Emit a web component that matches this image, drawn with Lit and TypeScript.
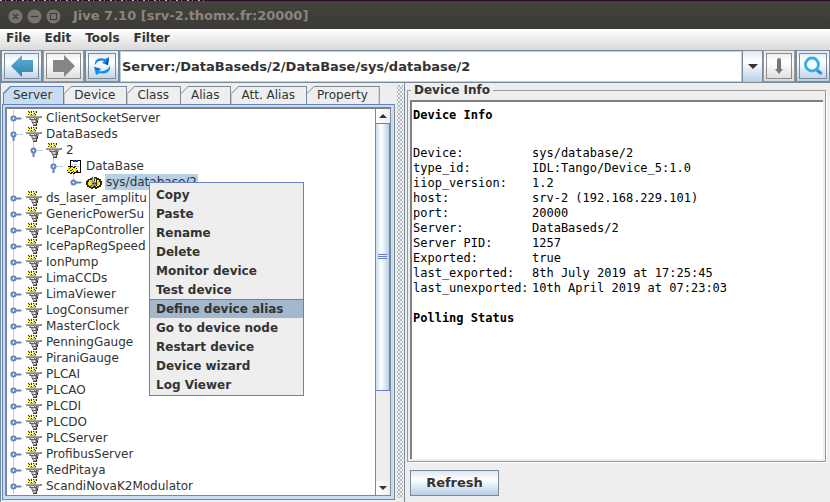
import { LitElement, html, css, svg, nothing } from "lit";
import { customElement, property, state } from "lit/decorators.js";
import { classMap } from "lit/directives/class-map.js";

interface TreeItem {
  label: string;
  icon: "server" | "class" | "device";
  children?: TreeItem[];
  selected?: boolean;
}

const server = (label: string, children?: TreeItem[]): TreeItem => ({ label, icon: "server", children });

const TREE: TreeItem[] = [
  server("ClientSocketServer"),
  server("DataBaseds", [
    server("2", [
      { label: "DataBase", icon: "class", children: [{ label: "sys/database/2", icon: "device", selected: true }] },
    ]),
  ]),
  ...[
    "ds_laser_amplitu", "GenericPowerSu", "IcePapController", "IcePapRegSpeed", "IonPump", "LimaCCDs",
    "LimaViewer", "LogConsumer", "MasterClock", "PenningGauge", "PiraniGauge", "PLCAI", "PLCAO", "PLCDI",
    "PLCDO", "PLCServer", "ProfibusServer", "RedPitaya", "ScandiNovaK2Modulator",
  ].map((name) => server(name)),
];

const INFO: [string, string][] = [
  ["Device:", "sys/database/2"],
  ["type_id:", "IDL:Tango/Device_5:1.0"],
  ["iiop_version:", "1.2"],
  ["host:", "srv-2 (192.168.229.101)"],
  ["port:", "20000"],
  ["Server:", "DataBaseds/2"],
  ["Server PID:", "1257"],
  ["Exported:", "true"],
  ["last_exported:", "8th July 2019 at 17:25:45"],
  ["last_unexported:", "10th April 2019 at 07:23:03"],
];

const ICONS = {
  server: svg`
    <path d="M3 1h2v1h-2zM2 2h3v1h-3zM3 3h2v2h-2zM7 2h3v1h-3zM8 1h2v1h-2zM7 3h2v2h-2z" fill="#ece62e"/>
    <path d="M2 1h1v1h-1zM5 1h1v2h-1zM3 2h1v1h-1zM5 4h1v1h-1zM2 4h1v1h-1zM7 1h1v1h-1zM10 1h1v2h-1zM8 3h1v1h-1zM9 4h1v1h-1z" fill="#3a370c"/>
    <path d="M4 5h6v1h-6z" fill="#b9b6b0"/>
    <path d="M0 6h16v2h-16z" fill="#8d8a85"/><path d="M1 6h13v1h-13z" fill="#aaa7a2"/>
    <path d="M3 8h10v2h-1v3h-1v2h-4v-1h-1v-2h-1v-2h-2z" fill="#a39893"/>
    <path d="M5 8h3v1h-3zM7 10h2v2h-2zM8 13h2v1h-2z" fill="#d9d1cd"/>
    <path d="M4 9h6v1h-6zM6 12h4v1h-4zM10 8h1v5h-1z" fill="#6f6462"/>
    <path d="M11 10h1v3h-1zM7 15h4v1h-4zM10 13h1v2h-1z" fill="#453f3e"/>`,
  class: svg`
    <path d="M4 2h11v13h-11z" fill="#000"/><path d="M5 3h9v11h-9z" fill="#fff"/>
    <path d="M7 2h5v2h-5z" fill="#1a28e8"/><path d="M6 6h5v1h-5zM9 8h4v1h-4z" fill="#b9c6f2"/>
    <path d="M2 8h2v1h1v-1h2v1h1v-1h2v2h1v2h1v2h-1v1h-2v1h-2v-1h-1v1h-2v-1h-2v-2h-1v-2h1z" fill="#191703"/>
    <path d="M2 9h2v1h1v-1h2v1h2v-1h1v2h1v2h-1v1h-2v1h-1v-1h-2v1h-1v-1h-2v-2h-1v-1h1z" fill="#f4ea2f"/>
    <path d="M4 12h2v1h-2zM6 11h1v1h-1zM7 13h1v1h-1zM3 10h1v1h-1z" fill="#4a4510"/>`,
  device: svg`
    <path d="M2 5h2v-1h2v-1h5v1h2v1h2v2h1v4h-1v2h-2v1h-2v1h-2v-1h-2v1h-2v-1h-2v-1h-2v-2h-1v-4h1z" fill="#2e2a08"/>
    <path d="M3 6h3v5h-1v1h-2v-1h-1v-3h1zM11 6h2v2h1v3h-1v1h-2zM5 12h2v1h-2zM10 12h1v1h-1z" fill="#e9df34"/>
    <path d="M3 8h1v1h-1zM13 9h1v1h-1z" fill="#fffcb0"/>
    <path d="M6 4h4v8h-4z" fill="#8f8c80"/><path d="M7 3h1v4h-1zM9 5h1v3h-1z" fill="#e2e0d8"/>
    <path d="M6 9h4v1h-4zM8 4h1v3h-1z" fill="#4b4838"/>`,
};

@customElement("jive-tree-node")
export class JiveTreeNode extends LitElement {
  @property({ attribute: false }) item!: TreeItem;
  @property({ type: Boolean }) last = false;

  static styles = css`
    :host { display: block; }
    .node.more { background: linear-gradient(#b8cfe5, #b8cfe5) 4px 0 / 1px 100% no-repeat; }
    .row { display: flex; align-items: center; height: 16px; white-space: nowrap; }
    .handle { flex: none; width: 17px; height: 16px; }
    .icon { flex: none; width: 16px; height: 16px; margin-right: 3px; }
    .label { padding: 0 1px; line-height: 16px; }
    .label.selected { background: #b8cfe5; }
    .children { padding-left: 20px; }
  `;

  render() {
    const { label, icon, children, selected } = this.item;
    return html`
      <div class=${classMap({ node: true, more: !this.last })} role="treeitem" aria-expanded=${children ? "true" : "false"}>
        <div class="row">
          <svg class="handle" viewBox="0 0 17 16" aria-hidden="true">
            <path d="M4.500 0v6M7 8.500h7" stroke="#b8cfe5" fill="none"/>
            ${children
              ? svg`<path d="M4.500 10v5" stroke="#6382bf" stroke-width="2"/>`
              : svg`<path d="M6 8.500h6" stroke="#6382bf" stroke-width="2"/>`}
            <circle cx="4.500" cy="8.500" r="2" fill="#fff" stroke="#6382bf" stroke-width="2"/>
          </svg>
          <svg class="icon" viewBox="0 0 16 16" shape-rendering="crispEdges" aria-hidden="true">${ICONS[icon]}</svg>
          <span class=${classMap({ label: true, selected: !!selected })}>${label}</span>
        </div>
        ${children
          ? html`<div class="children" role="group">
              ${children.map((c, i) => html`<jive-tree-node .item=${c} .last=${i === children.length - 1}></jive-tree-node>`)}
            </div>`
          : nothing}
      </div>`;
  }
}

@customElement("app-root")
export class AppRoot extends LitElement {
  @state() private tab = "Server";
  @state() private active = "Define device alias";

  static styles = css`
    :host {
      display: flex; flex-direction: column; position: relative; height: 100vh; overflow: hidden;
      background: #eee; color: #333; font: 12px/16px "DejaVu Sans", sans-serif;
    }
    * { box-sizing: border-box; }
    button, input { font: inherit; color: inherit; margin: 0; padding: 0; border: 0; border-radius: 0; }

    .title {
      flex: none; display: flex; align-items: center; gap: 4px; height: 29px; padding: 3px 8px 0;
      background:
        repeating-linear-gradient(90deg, #b9aeb8 0 2px, #2c0a26 2px 5px, #8d7f8b 5px 6px, #2c0a26 6px 11px) 0 0 / 208px 1px no-repeat,
        linear-gradient(#2c0a26, #2c0a26) 0 0 / 100% 1px no-repeat,
        linear-gradient(#45433e, #3b3a36);
      color: #8a867e;
    }
    .title svg { width: 15px; height: 15px; }
    .title h1 { margin: 0 0 0 8px; font: bold 13px/16px "DejaVu Sans", sans-serif; }

    .menubar { flex: none; display: flex; align-items: flex-start; gap: 14px; height: 21px; padding: 1px 6px 0; background: linear-gradient(#fff, #dadada); }
    .menubar button { background: none; font-weight: bold; line-height: 16px; }

    .toolbar { flex: none; display: flex; gap: 1px; height: 33px; padding: 0 0 1px 1px; background: #7a8a99; }
    .tool {
      flex: none; width: 41px; padding: 2px; border: 1px solid #7a8a99;
      background: linear-gradient(#dde8f3, #fff 35%, #b8cfe5);
    }
    .tool.narrow { width: 34px; }
    .tool.slim { width: 32px; }
    .tool:disabled { background: linear-gradient(#e8e8e8, #fff 35%, #dadada); border-color: #999; }
    .face { display: grid; place-items: center; height: 100%; border: 1px solid #7a8a99; }
    .tool:disabled .face { border-color: #8a8a8a; }
    .face svg { display: block; }
    .combo { flex: 1; min-width: 0; display: flex; border-top: 1px solid #7a8a99; }
    .combo input { flex: 1; min-width: 0; padding: 0 1px; background: #fff; border: 1px solid #b8cfe5; font-weight: bold; font-size: 13px; outline: 0; }
    .drop { width: 20px; display: grid; place-items: center; border-left: 1px solid #7a8a99; background: linear-gradient(#dde8f3, #fff 35%, #b8cfe5); }

    .main { flex: 1; min-height: 0; display: grid; grid-template-columns: 395px 9px minmax(0, 1fr); }
    .left { min-height: 0; display: flex; flex-direction: column; padding: 3px 0 2px 1px; border-left: 1px solid #7a8a99; }
    .tabs { flex: none; display: flex; padding-left: 1px; }
    .tab {
      --cut: polygon(7px 0, 100% 0, 100% 100%, 0 100%, 0 7px);
      height: 18px; padding: 1px 1px 0 0; background: #7a8a99; clip-path: var(--cut);
    }
    .tab span { display: block; height: 17px; padding: 0 11px 0 10px; line-height: 17px; background: #eee; clip-path: var(--cut); }
    .tab.on { background: #6382bf; padding-left: 1px; }
    .tab.on span { background: #c8ddf2; padding: 0 11px 0 9px; }
    .pane { flex: 1; min-height: 0; display: flex; padding: 2px 3px 3px 2px; background: #c8ddf2; border: 1px solid #6382bf; border-right-color: #7a8a99; border-bottom-color: #7a8a99; }
    .scroll { flex: 1; min-width: 0; display: flex; background: #fff; border: 1px solid #7a8a99; border-top: 2px solid #808080; border-left-width: 2px; }
    .tree { flex: 1; min-width: 0; overflow: hidden; padding: 1px 0 0 2px; }
    .bar { flex: none; width: 15px; display: flex; flex-direction: column; border-left: 1px solid #7a8a99; background: #eee; }
    .bar button { flex: none; height: 14px; display: grid; place-items: center; background: linear-gradient(90deg, #fff, #eee); }
    .thumb {
      flex: 267; display: grid; align-content: center; justify-items: center; gap: 1px; border: 1px solid #6382bf; border-left: 0;
      background: linear-gradient(90deg, #c8ddf2, #fff 40%, #b8cfe5);
    }
    .thumb i { width: 9px; height: 1px; background: #6382bf; }
    .track { flex: 91; }
    .split { margin: 2px 1px 4px 2px; background: radial-gradient(circle at 1px 1px, #b4bcc6 1px, transparent 1px) 1px 0 / 4px 4px, radial-gradient(circle at 3px 3px, #b4bcc6 1px, transparent 1px) 1px 0 / 4px 4px; }

    .right { display: flex; flex-direction: column; align-items: stretch; min-height: 0; padding: 0 4px 6px 2px; border-left: 1px solid #7a8a99; }
    .group { flex: 1; min-width: 0; min-height: 0; display: flex; margin: 0; padding: 2px; border: 1px solid #999; box-shadow: 1px 1px #fff; }
    .group legend { margin-left: 1px; padding: 0 3px; font-weight: bold; line-height: 15px; }
    .text { height: 100%; flex: 1; overflow: hidden; background: #fff; color: #000; border-top: 2px solid #808080; border-left: 2px solid #808080; padding: 6px 0 0 1px; font: 12px/15px "DejaVu Sans Mono", monospace; }
    .text h2 { margin: 0; font: inherit; font-weight: bold; }
    .info { border-collapse: collapse; margin: 23px 0 15px; }
    .info th, .info td { padding: 0; font-weight: normal; text-align: left; white-space: nowrap; }
    .info th { width: 119px; }
    .refresh { flex: none; align-self: flex-start; margin: 8px 0 0 3px; width: 89px; height: 26px; border: 1px solid #7a8a99; background: linear-gradient(#dde8f3, #fff 35%, #b8cfe5); font-weight: bold; font-size: 13px; }

    .popup { position: absolute; left: 149px; top: 182px; width: 155px; display: flex; flex-direction: column; padding: 2px 0 1px; background: #eee; border: 1px solid #6382bf; }
    .popup button { height: 19px; padding: 0 6px; background: none; font-weight: bold; line-height: 18px; text-align: left; white-space: nowrap; }
    .popup button.on { background: #a3b8cc; border-top: 1px solid #6382bf; }
  `;

  render() {
    const circle = svg`<circle cx="7.500" cy="7.500" r="7" fill="#77746d"/>`;
    return html`
      <header class="title">
        <svg viewBox="0 0 15 15" role="img" aria-label="Close">${circle}<path d="M5 5l5 5M10 5l-5 5" stroke="#3c3b37" stroke-width="1.300"/></svg>
        <svg viewBox="0 0 15 15" role="img" aria-label="Minimize">${circle}<path d="M4 7.500h7" stroke="#3c3b37" stroke-width="1.300"/></svg>
        <svg viewBox="0 0 15 15" role="img" aria-label="Maximize">${circle}<rect x="4.500" y="4.500" width="6" height="6" fill="none" stroke="#3c3b37"/></svg>
        <h1>Jive 7.10 [srv-2.thomx.fr:20000]</h1>
      </header>
      <nav class="menubar">${["File", "Edit", "Tools", "Filter"].map((m) => html`<button>${m}</button>`)}</nav>
      <div class="toolbar">
        <button class="tool" aria-label="Back"><span class="face">
          <svg width="24" height="24" viewBox="0 0 24 24"><defs><linearGradient id="b" x2="0" y2="1"><stop stop-color="#5fb2d4"/><stop offset="1" stop-color="#2f83ad"/></linearGradient></defs>
            <path d="M1 12L12 1v5h11v12H12v5z" fill="url(#b)"/></svg></span></button>
        <button class="tool" aria-label="Forward" disabled><span class="face">
          <svg width="24" height="24" viewBox="0 0 24 24"><path d="M23 12L12 1v5H1v12h11v5z" fill="#858585"/></svg></span></button>
        <button class="tool narrow" aria-label="Reload"><span class="face">
          <svg width="20" height="20" viewBox="0 0 20 20">
            <path d="M3 9C2 4 7 1 13 3l4-2-1 8-6-2 2-2C8 4 5 5 3 9z" fill="#1d86ea"/>
            <path d="M18 10c1 6-5 9-10 7l-4 2-2-8 7 2-2 2c4 1 9-1 11-5z" fill="#1590f4"/>
            <path d="M17 1l-1 8-3-1z" fill="#0c4fb8"/><path d="M2 11l7 2-4 1z" fill="#0c5cd0"/></svg></span></button>
        <div class="combo">
          <input aria-label="Path" value="Server:/DataBaseds/2/DataBase/sys/database/2" />
          <button class="drop" aria-label="Path history"><svg width="10" height="5" viewBox="0 0 10 5"><path d="M0 0h10L5 5z" fill="#333"/></svg></button>
        </div>
        <button class="tool slim" aria-label="Go down" disabled><span class="face">
          <svg width="12" height="18" viewBox="0 0 12 18"><path d="M4 3a2 2 0 0 1 4 0v9h2l-4 5-4-5h2z" fill="#777"/></svg></span></button>
        <button class="tool narrow" aria-label="Search"><span class="face">
          <svg width="20" height="20" viewBox="0 0 20 20"><path d="M12.500 13l5 4" stroke="#2b96d6" stroke-width="3.500" stroke-linecap="round"/>
            <circle cx="9" cy="8.500" r="6.500" fill="#f4faff" stroke="#36b0e6" stroke-width="2.800"/></svg></span></button>
      </div>
      <div class="main">
        <section class="left">
          <div class="tabs" role="tablist">
            ${["Server", "Device", "Class", "Alias", "Att. Alias", "Property"].map(
              (t) => html`<button role="tab" aria-selected=${t === this.tab} class=${classMap({ tab: true, on: t === this.tab })} @click=${() => (this.tab = t)}><span>${t}</span></button>`,
            )}
          </div>
          <div class="pane"><div class="scroll">
            <div class="tree" role="tree">${TREE.map((item) => html`<jive-tree-node .item=${item}></jive-tree-node>`)}</div>
            <div class="bar">
              <button aria-label="Scroll up"><svg width="8" height="4" viewBox="0 0 8 4"><path d="M0 4h8L4 0z" fill="#333"/></svg></button>
              <div class="thumb"><i></i><i></i><i></i></div>
              <div class="track"></div>
              <button aria-label="Scroll down"><svg width="8" height="4" viewBox="0 0 8 4"><path d="M0 0h8L4 4z" fill="#333"/></svg></button>
            </div>
          </div></div>
        </section>
        <div class="split" role="separator"></div>
        <section class="right">
          <fieldset class="group">
            <legend>Device Info</legend>
            <div class="text">
              <h2>Device Info</h2>
              <table class="info">${INFO.map(([k, v]) => html`<tr><th scope="row">${k}</th><td>${v}</td></tr>`)}</table>
              <h2>Polling Status</h2>
            </div>
          </fieldset>
          <button class="refresh">Refresh</button>
        </section>
      </div>
      <div class="popup" role="menu">
        ${["Copy", "Paste", "Rename", "Delete", "Monitor device", "Test device", "Define device alias", "Go to device node", "Restart device", "Device wizard", "Log Viewer"].map(
          (m) => html`<button role="menuitem" class=${classMap({ on: m === this.active })} @mouseenter=${() => (this.active = m)}>${m}</button>`,
        )}
      </div>`;
  }
}
